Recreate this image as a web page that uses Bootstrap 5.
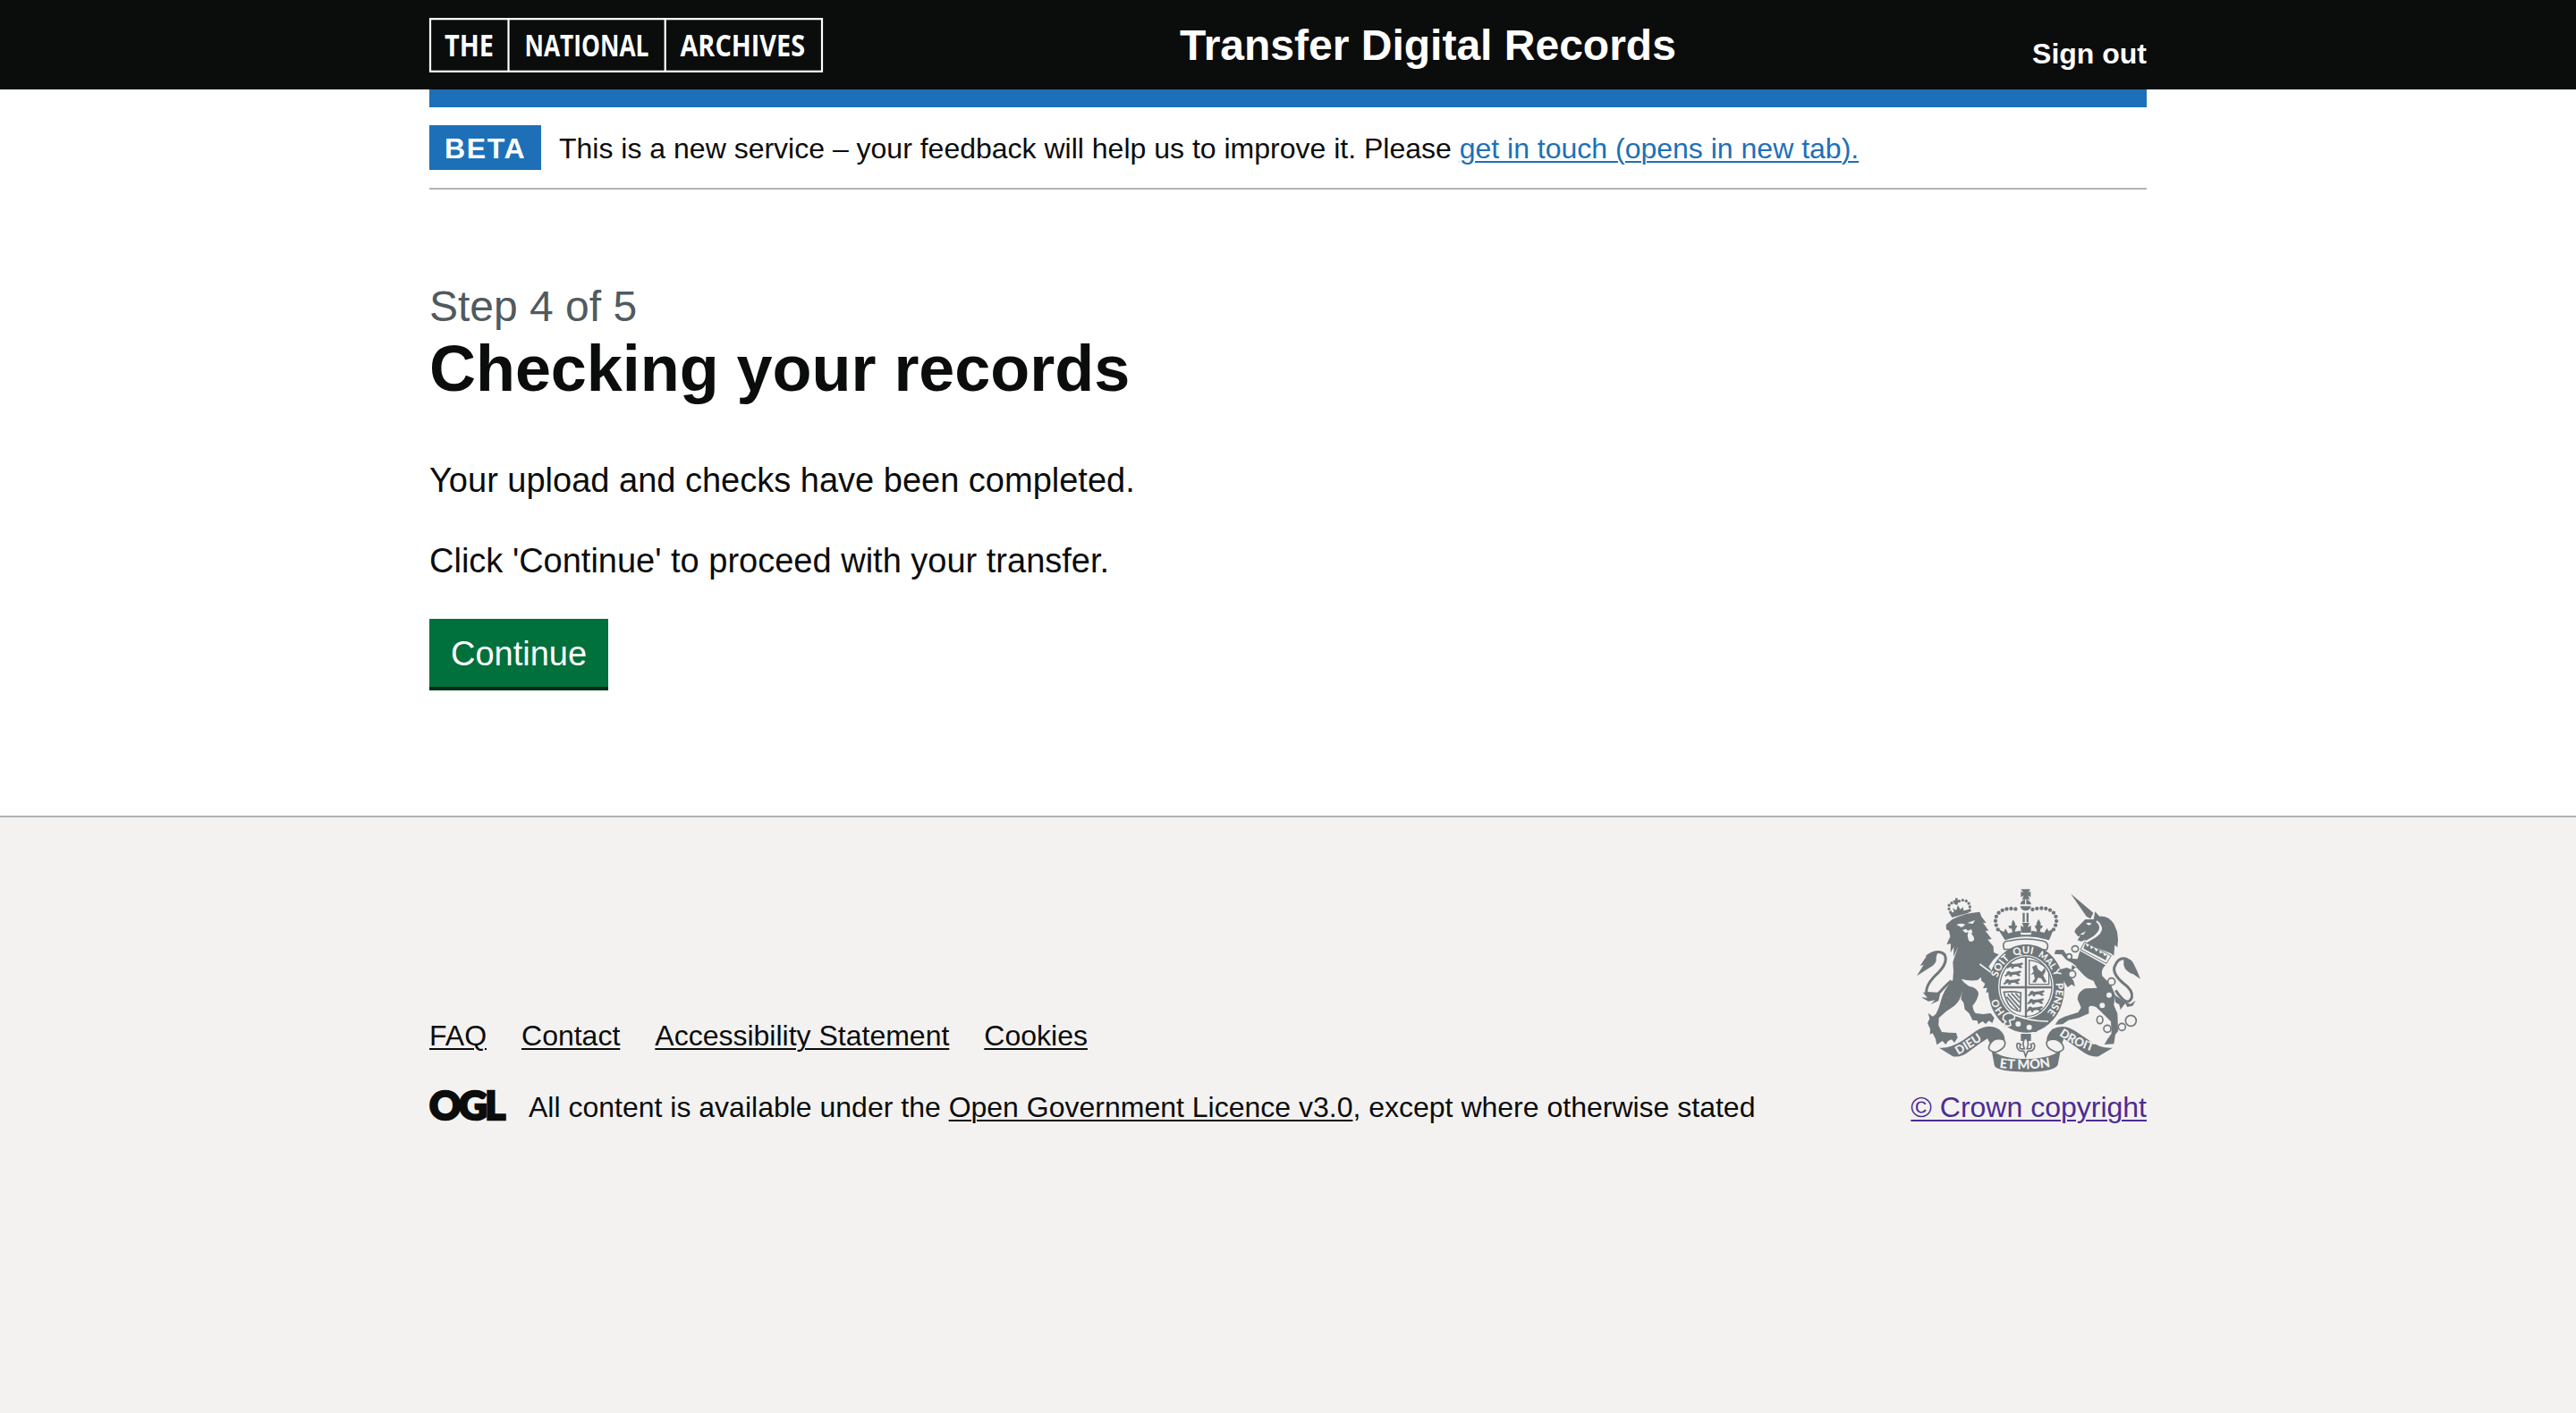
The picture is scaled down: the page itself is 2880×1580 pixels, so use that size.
<!DOCTYPE html>
<html lang="en">
<head>
<meta charset="utf-8">
<meta name="viewport" content="width=device-width, initial-scale=1">
<title>Checking your records</title>
<link href="https://cdn.jsdelivr.net/npm/bootstrap@5.3.0/dist/css/bootstrap.min.css" rel="stylesheet">
<style>
body{font-family:"Liberation Sans",Arial,sans-serif;font-size:32px;line-height:40px;color:#0b0c0c;background:#f3f2f1}
svg{overflow:visible}
.page-width{width:1920px;margin:0 auto}
.site-header{background:#0b0c0c;height:100px}
.site-header .page-width{height:100px}
.service-name{font-size:48px;line-height:60px;font-weight:700;color:#fff;text-decoration:none;padding-top:2px}
.logo-side{width:839px}
.sign-out{font-weight:700;color:#fff;text-decoration:none;padding-top:20px}
.blue-bar{height:20px;background:#1d70b8}
.phase{height:92px;border-bottom:2px solid #b1b4b6}
.phase-tag{background:#1d70b8;color:#fff;font-weight:700;letter-spacing:1.6px;width:125px;height:50px;line-height:52px;padding-left:17px;margin-right:20px}
.phase-text{padding-top:2px}
a{text-underline-offset:3px;text-decoration-thickness:2px}
.phase a{color:#1d70b8}
.top-area{background:#fff;height:912px}
.step{font-size:48px;line-height:60px;color:#505a5f;padding-top:101px}
.page-title{font-size:72px;line-height:80px;font-weight:700;letter-spacing:-.05px;margin:-1px 0 60px}
.copy{font-size:38px;line-height:50px;margin:0 0 40px}
.go-btn{background:#00703c;color:#fff;border:0;border-radius:0;box-shadow:0 4px 0 #002d18;font-size:38px;line-height:38px;width:200px;height:76px;padding:2px 0 0}
.site-footer{border-top:2px solid #b1b4b6;padding-top:80px}
.site-footer a{color:#0b0c0c}
.site-footer a.crown-link{color:#4c2c92}
.foot-nav{gap:39px;margin-bottom:40px}
.ogl-logo{margin-right:25px}
.crest{display:block;margin:0 7px 19px 0}
</style>
</head>
<body>
<div class="top-area">
<header class="site-header">
  <div class="page-width d-flex align-items-center">
    <div class="logo-side">
      <svg class="d-block" width="440" height="61" viewBox="0 0 440 61" fill="#fff" font-family="Open Sans,sans-serif" font-size="34" font-weight="700">
        <path d="M1 1.2H439V59.8H1ZM88.5 1V60M263.7 1V60" fill="none" stroke="#fff" stroke-width="2.2"/>
        <text x="17" y="42.500" textLength="55" lengthAdjust="spacingAndGlyphs">THE</text>
        <text x="106.500" y="42.500" textLength="139" lengthAdjust="spacingAndGlyphs">NATIONAL</text>
        <text x="280.500" y="42.500" textLength="139.500" lengthAdjust="spacingAndGlyphs">ARCHIVES</text>
      </svg>
    </div>
    <a class="service-name text-nowrap" href="#">Transfer Digital Records</a>
    <a class="sign-out ms-auto" href="#">Sign out</a>
  </div>
</header>
<div class="page-width">
  <div class="blue-bar"></div>
  <div class="phase d-flex align-items-center">
    <strong class="phase-tag">BETA</strong>
    <span class="phase-text">This is a new service – your feedback will help us to improve it. Please <a href="#">get in touch (opens in new tab).</a></span>
  </div>
  <main>
    <div class="step">Step 4 of 5</div>
    <h1 class="page-title">Checking your records</h1>
    <p class="copy">Your upload and checks have been completed.</p>
    <p class="copy">Click 'Continue' to proceed with your transfer.</p>
    <button class="btn go-btn" type="button">Continue</button>
  </main>
</div>
</div>
<footer class="site-footer">
  <div class="page-width d-flex justify-content-between align-items-end">
    <div>
      <div class="foot-nav d-flex">
        <a href="#">FAQ</a><a href="#">Contact</a><a href="#">Accessibility Statement</a><a href="#">Cookies</a>
      </div>
      <div class="d-flex align-items-center">
        <svg class="ogl-logo" width="86" height="40" viewBox="0 0 86 40" fill="#0b0c0c" stroke="#0b0c0c" stroke-width="2.600" font-family="Lato,sans-serif" font-weight="900" font-size="43">
          <text x="0" y="33.500" textLength="82.500" lengthAdjust="spacingAndGlyphs" letter-spacing="-2.500">OGL</text>
        </svg>
        <span>All content is available under the <a href="#">Open Government Licence v3.0</a>, except where otherwise stated</span>
      </div>
    </div>
    <div class="d-flex flex-column align-items-end">
      <svg class="crest" width="250" height="205" viewBox="39 70 750 615" fill="#6f777b">
        <defs>
          <path id="g1" d="M335 483A100 115 0 0 1 306 420"/>
          <path id="g2" d="M310 368A100 115 0 0 1 353 304"/>
          <path id="g3" d="M366 296A100 115 0 0 1 434 292"/>
          <path id="g4" d="M444 296A100 115 0 0 1 491 341"/>
          <path id="g5" d="M493 344A100 115 0 0 1 502 370"/>
          <path id="g6" d="M505 386A100 115 0 0 1 468 492"/>
          <path id="sc1" d="M178 627Q236 594 288 556"/>
          <path id="sc2" d="M316 669Q405 682 500 664"/>
          <path id="sc3" d="M516 560Q570 600 656 624"/>
          <g id="pard"><path d="M2 5l8-4 7 4 20-2 12-3 3 5-9 5 7 6-7 3-10-6-12 2-2 6-8-2 2-5-8 2-6 5-4-5 7-6z"/></g>
        </defs>
        <!-- lion -->
        <g fill="none" stroke="#6f777b" stroke-width="10" stroke-dasharray="0 12" stroke-linecap="round">
          <path d="M152 148C136 122 156 112 172 118M172 118C190 98 224 108 216 144"/>
        </g>
        <path d="M149 151l15-4-5-13 12 8 6-18 8 15 9-8 2 12 20-5-3 12-56 16zM168 101h8v7h7v7h-7v7h-8v-7h-7v-7h7z"/>
        <path d="M137 190L158 172Q200 150 250 147L256 163 272 184 261 183 280 210 269 210 290 238 277 240 296 263 297 283 314 290 297 306 280 330 293 350 309 380 316 412 307 430 298 418 290 430 284 414 271 419 275 402 261 403 268 388 256 378 254 366 243 376Q215 380 188 372 197 386 214 396 246 402 246 424 240 447 226 462 228 478 236 487L262 490 287 487 299 503 292 520 281 512 270 523 260 514 245 524 242 512 226 510 215 488 200 474 196 452 187 440 192 410Q186 446 165 462 137 478 113 503L112 528 123 550 148 552 171 553 176 569 165 586 156 575 144 580 136 592 125 580 106 593 102 573 92 554 83 558 84 540 75 520 82 505 77 486 92 498 103 490Q114 470 120 445 130 405 160 375 164 345 160 315L178 262 162 298 163 265 152 284 153 254 139 256 151 230 147 210 138 206Z"/>
        <path d="M172 190q16-8 30 0l-13 9zM208 184l26-9-7 12zM192 208l12-4 6 6 12-5 4 12-5 2q12 12 10 22-8 10-18 2l-4-16 3-12-10 2z" fill="#f3f2f1"/>
        <path d="M250 322l38 28 14 34" fill="none" stroke="#f3f2f1" stroke-width="5"/>
        <path d="M72 297Q110 270 132 290 145 315 112 350 65 392 72 423 88 447 120 412 140 390 155 378" fill="none" stroke="#6f777b" stroke-width="9"/>
        <path d="M108 286Q80 278 66 304L50 328 62 324 39 362 82 334Q108 320 104 300ZM75 415L60 418 75 435 54 434 78 447 100 443 86 457 112 445 118 418Z"/>
        <!-- unicorn -->
        <path d="M555 86L631 150 622 170 608 162ZM632 172L637 146 652 162Q682 160 700 187L711 213 714 240 712 266 703 258 700 294 690 286 601 252 606 240 590 246 578 242 588 226 580 230 568 214 572 204 604 172Z"/>
        <path d="M606 186q10-6 20 0l-9 6zM586 222l20-10-8 12zM640 180q26 20-8 48l-30 18 4 6 34-20q38-26 4-56z" fill="#f3f2f1"/>
        <path d="M602 248L691 294 675 320 588 273Z" fill="#f3f2f1" stroke="#6f777b" stroke-width="3"/>
        <path d="M598 270l6-18 7 12 9-8 3 16 10-6 7 14 11-8 2 15 10-4 5 12 10-4-5 18z"/>
        <path d="M586 278L672 326Q655 342 661 362L690 392 704 425 700 460 712 488 713 512 714 548 705 558 700 590 668 592 678 575 692 555 690 515 660 485 640 466 628 462Q618 462 616 466L616 488 583 502 548 510 528 524 503 525 515 508 535 498 580 484 590 468 578 440Q578 415 604 404L644 402Q636 390 632 378 615 375 598 358L576 335 560 325 555 352 545 354 565 378 570 398 558 390 545 400 530 375 513 355 520 340 542 334 562 342 575 330 560 318 540 308 525 290 500 288 505 275 530 274 545 295 560 304 578 305Z"/>
        <path d="M706 410Q745 470 760 435 766 410 730 385 690 350 705 325 718 296 745 306" fill="none" stroke="#6f777b" stroke-width="9"/>
        <path d="M733 305Q752 298 765 318L778 345 789 372 765 356Q738 348 733 325ZM702 425L740 452 722 475 718 458 705 450ZM735 448l20 8 18-12-10 18-18 4z"/>
        <g fill="#f3f2f1" stroke="#6f777b" stroke-width="5">
          <ellipse cx="570" cy="271" rx="11" ry="10"/><circle cx="550" cy="297" r="9"/><circle cx="560" cy="356" r="12"/><circle cx="692" cy="381" r="12"/><circle cx="684" cy="426" r="9" stroke="none"/><circle cx="661" cy="461" r="9" stroke="none"/><ellipse cx="653" cy="509" rx="10" ry="13"/><circle cx="678" cy="539" r="12"/><circle cx="727" cy="533" r="12"/><circle cx="757" cy="512" r="18"/>
        </g>
        <!-- crown -->
        <path d="M388 71h32l-7 11 8-4v20l-9-6 6 13h-26l6-13-10 6V78l9 4zM386 122q2-14 16-16v16zM406 106q14 2 17 16h-17zM386 128h36q-2 14-18 15-15-1-18-15zM394 150h7v32h-7zM407 150h7v32h-7zM392 184h25l-6 14 11-5v24h-34v-24l10 5zM311 204l20 10 5-11 10 16 14-4q-8-26 2-42 14 18 6 40l18-3 2 14h34l2-14 18 3q-8-26 6-42 12 18 4 42l14 4 10-16 5 11 18-10-16 40q-76-24-148 0zM346 193h30l-4 10h-22zM434 193h28l-4 10h-20z"/>
        <path d="M311 206C286 158 322 124 384 140M498 206C526 158 488 120 424 140" fill="none" stroke="#6f777b" stroke-width="13" stroke-dasharray="0 15" stroke-linecap="round"/>
        <!-- garter and shield -->
        <path d="M332 272Q322 244 350 244 404 232 460 244 486 250 475 274Z" fill="#f3f2f1" stroke="#6f777b" stroke-width="5"/>
        <ellipse cx="406" cy="404" rx="128" ry="148"/>
        <ellipse cx="405" cy="398" rx="93" ry="106" fill="#f3f2f1"/>
        <ellipse cx="405" cy="398" rx="87" ry="100" fill="none" stroke="#6f777b" stroke-width="4"/>
        <path d="M405 298V502M318 400H492" stroke="#6f777b" stroke-width="7"/>
        <use href="#pard" x="344" y="317"/><use href="#pard" x="338" y="344"/><use href="#pard" x="334" y="371"/>
        <use href="#pard" x="416" y="410"/><use href="#pard" x="414" y="437"/><use href="#pard" x="410" y="463"/>
        <path d="M416 309Q464 314 482 350V390H416Z" fill="none" stroke="#6f777b" stroke-width="4"/>
        <path d="M426 332l14-8 6 16 12 8 10-14 3 12-8 14 12 22-10 2-9-14-10-2-8 16-12-1 9-12-4-16-10 4 10-12z"/>
        <path d="M331 416Q360 412 388 418L386 480Q345 478 331 416ZM344 422l40 46M356 420l28 30M340 432l38 44M370 420l14 16" fill="none" stroke="#6f777b" stroke-width="5"/>
        <g fill="#f3f2f1" font-family="Lato,sans-serif" font-weight="900" font-size="34">
          <text><textPath href="#g1">HO</textPath></text>
          <text><textPath href="#g2">SOIT</textPath></text>
          <text><textPath href="#g3">QUI</textPath></text>
          <text font-size="31"><textPath href="#g4">MAL</textPath></text>
          <text><textPath href="#g5">Y</textPath></text>
          <text><textPath href="#g6">PENSE</textPath></text>
        </g>
        <path d="M334 488Q345 478 362 488L370 500Q420 516 466 520L440 550Q385 552 350 528L334 532 328 510Z"/>
        <path d="M330 495q18-18 38 0l-2 12-16 4 4 16q-14 8-24-4l8-8-10-8z" fill="none" stroke="#f3f2f1" stroke-width="5"/>
        <circle cx="379" cy="523" r="9" fill="#f3f2f1"/><circle cx="416" cy="534" r="9" fill="#f3f2f1"/>
        <path d="M369 493Q420 515 480 514" fill="none" stroke="#f3f2f1" stroke-width="5"/>
        <!-- motto ribbon -->
        <path d="M114 603Q150 606 194 578L238 546Q280 520 314 540 335 556 334 576L316 572Q295 572 285 590L276 572Q250 588 218 612 190 636 160 632ZM696 603Q655 606 620 580L572 548Q532 520 494 540 476 556 474 578L492 574Q516 572 526 588L532 572Q564 594 592 614 622 636 648 632Z"/>
        <path d="M285 590Q300 565 332 577 345 602 303 618 270 612 285 590ZM526 590Q508 566 477 579 465 602 508 618 542 612 526 590Z" fill="#f3f2f1" stroke="#6f777b" stroke-width="5"/>
        <path d="M290 612Q330 640 404 640 480 640 521 612L512 660Q500 684 404 684 312 682 300 665Z"/>
        <path d="M388 556h34v24h-34z"/>
        <path d="M404 568Q390 584 400 606 376 610 388 592 370 580 376 604 382 616 398 614L404 632 411 614Q432 616 434 600 435 580 421 592 430 608 409 606 418 584 404 568Z" fill="#f3f2f1" stroke="#6f777b" stroke-width="5"/>
        <g fill="#f3f2f1" font-family="Lato,sans-serif" font-weight="900" font-size="44">
          <text font-size="40"><textPath href="#sc1">DIEU</textPath></text>
          <text><textPath href="#sc2">ET MON</textPath></text>
          <text font-size="40"><textPath href="#sc3">DROIT</textPath></text>
        </g>
      </svg>
      <a class="crown-link" href="#">© Crown copyright</a>
    </div>
  </div>
</footer>
<script src="https://cdn.jsdelivr.net/npm/bootstrap@5.3.0/dist/js/bootstrap.bundle.min.js"></script>
</body>
</html>
